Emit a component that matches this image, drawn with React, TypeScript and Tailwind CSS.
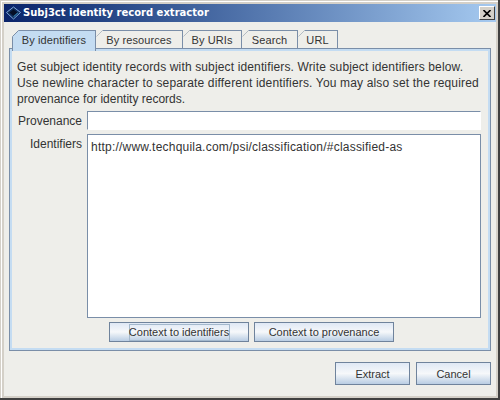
const tabs = [
  { label: 'By identifiers', w: 'w-[84px]', active: true },
  { label: 'By resources', w: 'w-[87px]' },
  { label: 'By URIs', w: 'w-[59px]' },
  { label: 'Search', w: 'w-[56px]' },
  { label: 'URL', w: 'w-[40px]' },
]

function Tab({ label, w, active }: { label: string; w: string; active?: boolean }) {
  return (
    <div
      className={`${w} relative flex items-center justify-center border-t border-r border-[#7a8ea8] text-[11px] tracking-[0.1px] ${
        active ? 'h-[21px] pb-[2px] bg-[#c4dcf2] border-l z-10' : 'h-[18px] bg-[#eeeeea]'
      }`}
    >
      {/* chamfered corner of the tab */}
      <svg width="7" height="7" viewBox="0 0 7 7" className={`absolute -top-[1px] ${active ? '-left-[1px]' : 'left-0'}`}>
        <path d="M0 0H7L0 7Z" fill="#eeeeea" />
        <path d="M6.5 0.5 0.5 6.5" stroke={active ? '#7a8ea8' : '#b4bcc4'} strokeWidth="1" />
      </svg>
      {label}
    </div>
  )
}

function ActionButton({ label, w, h, focused }: { label: string; w: string; h: string; focused?: boolean }) {
  return (
    <button className={`${w} ${h} flex items-center justify-center border border-[#6f839c] bg-gradient-to-b from-[#dfe8f5] via-[#f6f8fa] to-[#b9cde3] text-[11px] whitespace-nowrap text-[#333]`}>
      <span className={focused ? 'border border-[#a3b8cc] w-[101px] h-[17px] flex items-center justify-center' : ''}>{label}</span>
    </button>
  )
}

export default function App() {
  return (
    <div className="w-[500px] h-[400px] flex flex-col overflow-hidden bg-[#d4d0c8] border-b-2 border-r-2 border-[#404040] pt-[4px] pl-[4px] pr-[2px] pb-[2px] shadow-[inset_1px_1px_0_#d4d0c8,inset_2px_2px_0_#ffffff] text-[12px] leading-[16px] text-[#333] font-['Liberation_Sans',Arial,sans-serif]">
      {/* Title bar */}
      <div className="h-[18px] shrink-0 flex items-center bg-gradient-to-r from-[#0a246a] to-[#a6caf0] pl-[2px] pr-[1px]">
        <svg width="16" height="14" viewBox="0 0 16 14" className="shrink-0 mr-[1px]">
          <path d="M7.5 1 14.5 6.5 7.5 13 0.5 6.5Z" fill="#0d2a58" stroke="#7fa8dc" strokeWidth="1" />
          <path d="M3.5 6.5 7.5 3.5 11.5 6.5 7.5 10Z" fill="#050f26" />
          <path d="M7.5 10 11.5 6.5 12.5 7 7.5 11.5Z" fill="#2f78a8" />
        </svg>
        <span className="flex-1 text-white font-bold text-[10px] font-['DejaVu_Sans',sans-serif]">Subj3ct identity record extractor</span>
        <div className="w-[16px] h-[14px] flex items-center justify-center bg-[#d4d0c8] border border-t-white border-l-white border-r-[#404040] border-b-[#404040]">
          <svg width="8" height="7" viewBox="0 0 8 7">
            <path d="M0.5 0 7.5 7M7.5 0 0.5 7" stroke="#000" strokeWidth="1.6" />
          </svg>
        </div>
      </div>

      {/* Content */}
      <div className="flex-1 flex flex-col bg-[#eeeeea] pl-[5px] pr-[5px] pt-[8px]">
        {/* Tabs */}
        <div className="flex pl-[3px] h-[18px] shrink-0 items-start">
          {tabs.map(t => (
            <Tab key={t.label} {...t} />
          ))}
        </div>

        {/* Tab panel */}
        <div className="h-[303px] shrink-0 border border-[#7a8ea8] bg-[#eeeeea]">
          <div className="h-full border-[2px] border-[#c4dcf2] pl-[5px] pr-[7px] pt-[8px] flex flex-col">
            <p className="h-[48px] shrink-0 whitespace-nowrap">
              <span className="tracking-[0.14px]">Get subject identity records with subject identifiers. Write subject identifiers below.</span>
              <br />
              <span className="tracking-[0.16px]">Use newline character to separate different identifiers. You may also set the required</span>
              <br />
              provenance for identity records.
            </p>
            <div className="flex items-center mt-[4px] h-[19px] shrink-0">
              <div className="w-[65px] text-right shrink-0 pt-[1px]">Provenance</div>
              <div className="ml-[5px] flex-1 h-[19px] bg-white border border-[#7a8ea8] border-r-white border-b-white" />
            </div>
            <div className="flex mt-[4px] h-[184px] shrink-0">
              <div className="w-[65px] text-right shrink-0 pt-[2px]">Identifiers</div>
              <div className="ml-[5px] flex-1 bg-white border border-[#7a8ea8] px-[3px] pt-[4px] tracking-[0.22px]">
                http://www.techquila.com/psi/classification/#classified-as
              </div>
            </div>
            <div className="flex gap-[5px] mt-[4px] pl-[92px]">
              <ActionButton label="Context to identifiers" w="w-[140px]" h="h-[20px]" focused />
              <ActionButton label="Context to provenance" w="w-[140px]" h="h-[20px]" />
            </div>
          </div>
        </div>

        {/* Dialog buttons */}
        <div className="flex justify-end gap-[6px] mt-[11px]">
          <ActionButton label="Extract" w="w-[75px]" h="h-[23px]" />
          <ActionButton label="Cancel" w="w-[75px]" h="h-[23px]" />
        </div>
      </div>
    </div>
  )
}
